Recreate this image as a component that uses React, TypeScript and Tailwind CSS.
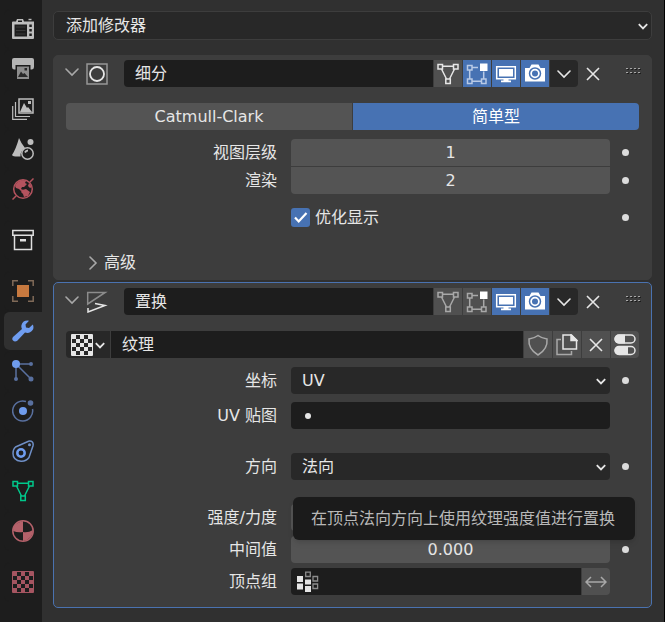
import { useState, type ReactNode } from "react";

function Icon({ children, className = "" }: { children: ReactNode; className?: string }) {
  return (
    <svg viewBox="0 0 22 22" className={`h-[22px] w-[22px] shrink-0 ${className}`} fill="none" stroke="currentColor" strokeWidth="1.5" aria-hidden="true">
      {children}
    </svg>
  );
}

function Chevron({ className = "" }: { className?: string }) {
  return (
    <svg viewBox="0 0 14 14" className={`h-[14px] w-[14px] shrink-0 ${className}`} fill="none" stroke="currentColor" strokeWidth="1.6" strokeLinecap="round" aria-hidden="true">
      <path d="M1 4l6 6 6-6" />
    </svg>
  );
}

function SmallChevron({ className = "" }: { className?: string }) {
  return (
    <svg viewBox="0 0 10 8" className={`h-2 w-[10px] shrink-0 ${className}`} fill="none" stroke="currentColor" strokeWidth="1.8" aria-hidden="true">
      <path d="M.8 2.200L5 6.500l4.200-4.300" />
    </svg>
  );
}

function Cross() {
  return (
    <svg viewBox="0 0 14 14" className="h-[14px] w-[14px]" fill="none" stroke="currentColor" strokeWidth="1.6" aria-hidden="true">
      <path d="M1 1l12 12M13 1L1 13" />
    </svg>
  );
}

function Grip() {
  return (
    <svg viewBox="0 0 16 8" className="h-2 w-4" aria-hidden="true">
      {[0, 4, 8, 12].map((x) => (
        <g key={x}>
          <path d={`M${x} 1h2v1h-2zM${x} 5h2v1h-2z`} fill="#a8a8a8" />
          <path d={`M${x + 1} 2h2v1h-2zM${x + 1} 6h2v1h-2z`} fill="#1c1c1c" />
        </g>
      ))}
    </svg>
  );
}

const MeshIcon = ({ className = "" }: { className?: string }) => (
  <Icon className={className}>
    <path d="M1 1.500h4.500V6H1zM16.500 1.500H21V6h-4.500zM8.800 16h4.500v4.500H8.800zM5.500 3.200h11M4.500 6l5 10M17.500 6l-5 10" />
  </Icon>
);

const EditIcon = ({ className = "" }: { className?: string }) => (
  <Icon className={className}>
    <path d="M1.500 2.500H6V7H1.500zM1.500 16H6v4.500H1.500zM15.500 16H20v4.500h-4.500zM3.700 7v9M6 18.300h9.500M17.700 8.500V16M6 4.500h6" />
    <path d="M14 .5h7.500V8H14z" fill="white" stroke="none" />
  </Icon>
);

const MonitorIcon = () => (
  <Icon>
    <path d="M1.700 3.700h18.600v12H1.700z" />
    <path d="M4 6h14v7.500H4zM8.500 15.500h5V18h-5zM6 17.500h10v1.700H6z" fill="currentColor" stroke="none" />
  </Icon>
);

const CameraIcon = () => (
  <Icon>
    <path d="M1 5h4.500l2-3.500h7l2 3.500H21v13.500H1z" fill="currentColor" stroke="none" />
    <circle cx="11" cy="10.500" r="5.500" stroke="#4772b3" />
    <circle cx="11" cy="10.500" r="3" fill="#4772b3" stroke="none" />
  </Icon>
);

const CheckerIcon = () => (
  <Icon>
    <path d="M.5 .5h21v21H.5z" strokeWidth="1" />
    {[0, 1, 2, 3, 4].map((row) =>
      [0, 1, 2, 3, 4]
        .filter((col) => (row + col) % 2 === 0)
        .map((col) => <rect key={`${row}${col}`} x={1 + col * 4} y={1 + row * 4} width="4" height="4" fill="currentColor" stroke="none" />),
    )}
  </Icon>
);

type Tab = { name: string; className: string; icon: ReactNode };

const tabGroups: Tab[][] = [
  [
    {
      name: "工具", className: "text-[#bdbdbd]",
      icon: (
        <Icon>
          <path d="M1 3.500h3L5 1h6l1 2.500h10V20q0 1-1 1H1q-1 0-1-1V4.500q0-1 1-1z" fill="currentColor" stroke="none" />
          <path d="M16.500 .8h3v1.400h-3z" fill="currentColor" stroke="none" />
          <path d="M6 2.500h4V4H6zM2.500 6.500h12.500v12H2.500zM17.300 6.500h2.500v2.500h-2.500zM17.300 11h2.500v2.500h-2.500zM17.300 15.500h2.500V18h-2.500z" fill="#1d1d1d" stroke="none" />
          <path d="M4 9h9.500M4 12.500h9.500M4 16h9.500" stroke="#3a3a3a" strokeWidth="1" />
        </Icon>
      ),
    },
    {
      name: "输出", className: "text-[#b5b5b5]",
      icon: (
        <Icon>
          <path d="M2 0h18q2 0 2 2v7q0 2-2 2.500h-1.500V7h-15v4.500H2Q0 11 0 9V2q0-2 2-2z" fill="currentColor" stroke="none" />
          <path d="M5 8.500h12V21H5z" fill="#8d8d8d" stroke="none" />
          <path d="M6 19l3-5.500 2 2.500 1.500-1L16 19zM12.500 10H15v2.500h-2.500z" fill="#292929" stroke="none" />
        </Icon>
      ),
    },
    {
      name: "视图层", className: "text-[#bdbdbd]",
      icon: (
        <Icon>
          <path d="M7 1h14v14H7z" />
          <path d="M8 14l4-9 3 5 1-1 4 5zM16 3h3v3h-3z" fill="currentColor" stroke="none" />
          <path d="M3.500 4v14.500H18M.7 8v13.300H15" strokeWidth="1.200" />
        </Icon>
      ),
    },
    {
      name: "场景", className: "text-[#bdbdbd]",
      icon: (
        <Icon>
          <path d="M7 0q2 5 6 10-5 3-4.500 8.500Q1 19 0 17 4 11 7 0z" fill="currentColor" stroke="none" />
          <circle cx="18.500" cy="4" r="3" fill="currentColor" stroke="none" />
          <circle cx="15.500" cy="15.500" r="5.700" fill="#1d1d1d" />
          <path d="M13 14.500q1-2 3-2" strokeWidth="2" />
        </Icon>
      ),
    },
    {
      name: "世界环境", className: "text-[#b4535e]",
      icon: (
        <Icon>
          <circle cx="11" cy="11" r="9.300" strokeWidth="1.500" />
          <path d="M.5 21.500L4 18M18 4L21.500 .5" />
          <path d="M3 8q2-5 8-6l3 1-1 2 2 1-3 3-2 0-1 2 2 1-2 1-2-2-3-1zM10 12l4-1 4 3-2 4-4 1-1-3-2-2zM17 5l3 4-2 1-2-2z" fill="currentColor" stroke="none" />
        </Icon>
      ),
    },
  ],
  [
    {
      name: "集合", className: "text-[#dfdfdf]",
      icon: <Icon><path d="M.8 1.500h20.400v4.700H.8zM2.500 6.500v14h17v-14" /><path d="M8 10h6v2.500H8z" fill="currentColor" stroke="none" /></Icon>,
    },
  ],
  [
    {
      name: "物体", className: "text-[#c7793f]",
      icon: <Icon><path d="M5 5h12v12H5z" fill="currentColor" stroke="none" /><path d="M.8 6V.8H6M16 .8h5.200V6M21.200 16v5.200H16M6 21.200H.8V16" stroke="#806a58" /></Icon>,
    },
    {
      name: "修改器", className: "text-[#6f9df0]",
      icon: <Icon><path d="M20.800 4.500L17 8l-3-.5L13.500 4.500 17 .7Q11 0 9.500 5q-.5 2.500.5 4L1 17q-1.500 2 0 3.500t4 .5l8-8.500q5 1.500 8-3 1-2.500-.2-5z" fill="currentColor" stroke="none" /></Icon>,
    },
    {
      name: "粒子", className: "text-[#59709f]",
      icon: (
        <Icon>
          <path d="M4 4h15M4 4l15 15M4 4v15" />
          <circle cx="4" cy="4" r="4" fill="#6f9ced" stroke="none" />
          <path d="M17 4a2 2 0 104 0 2 2 0 10-4 0M2 19a2 2 0 104 0 2 2 0 10-4 0M16.500 19a2.500 2.500 0 105 0 2.500 2.500 0 10-5 0" fill="currentColor" stroke="none" />
        </Icon>
      ),
    },
    {
      name: "物理", className: "text-[#59709f]",
      icon: <Icon><path d="M14 1.500A10 10 0 1 0 20.500 9" /><circle cx="11" cy="11" r="4" fill="#6f9ced" stroke="none" /><circle cx="18.500" cy="3" r="2.800" fill="currentColor" stroke="none" /></Icon>,
    },
    {
      name: "约束", className: "text-[#6f8fc6]",
      icon: <Icon><path d="M3.500 7L16.500 1.200q5.500-.7 4.500 4.500L17 17.500q-3 4-8 3.700-8-.7-8-7.700Q1 9 3.500 7z" /><circle cx="9" cy="13" r="3.700" strokeWidth="2.500" stroke="#6f9ced" /><circle cx="17.500" cy="4.700" r="1.500" fill="currentColor" stroke="none" /></Icon>,
    },
    { name: "数据", className: "text-[#00c88b]", icon: <MeshIcon /> },
    {
      name: "材质", className: "text-[#b4616a]",
      icon: <Icon><circle cx="11" cy="11" r="10.200" /><path d="M11 1v11Q6 13 1 11 1 3 11 1zM11 12q5 1 10-2 0 9-10 11z" fill="currentColor" stroke="none" /></Icon>,
    },
  ],
  [{ name: "纹理", className: "text-[#a65561]", icon: <CheckerIcon /> }],
];

function Sidebar() {
  const [active, setActive] = useState("修改器");
  return (
    <nav aria-label="属性" className="flex w-[42px] shrink-0 flex-col bg-[#1d1d1d] pt-[9px] pl-1">
      {tabGroups.map((group, i) => (
        <div key={i} className="mb-[11px] flex flex-col">
          {group.map((tab) => (
            <button
              key={tab.name}
              type="button"
              aria-label={tab.name}
              onClick={() => setActive(tab.name)}
              className={`flex h-10 items-center rounded-l-md border-y border-[#1d1d1d] pl-2 ${tab.className} ${tab.name === active ? "bg-[#303030]" : ""}`}
            >
              {tab.icon}
            </button>
          ))}
        </div>
      ))}
    </nav>
  );
}

function ToolButton({ label, active = false, children }: { label: string; active?: boolean; children: ReactNode }) {
  return (
    <button
      type="button"
      aria-label={label}
      className={`flex h-full w-7 shrink-0 items-center justify-center ${active ? "bg-[#4772b3] text-white" : "bg-[#505050] text-[#a8a8a8]"}`}
    >
      {children}
    </button>
  );
}

function ModifierHeader({ name, icon, editing = false }: { name: string; icon: ReactNode; editing?: boolean }) {
  return (
    <header className="flex h-[27px] items-center pr-[9px] pl-[11px]">
      <button type="button" aria-label={`折叠 ${name}`} className="mr-[7px] pb-1 text-[#a8a8a8]"><Chevron /></button>
      {icon}
      <div className="ml-4 flex h-full min-w-0 flex-1 gap-px">
        <input aria-label="名称" defaultValue={name} className="h-full min-w-0 flex-1 rounded-l bg-[#1d1d1d] px-[11px] pb-1" />
        <ToolButton label="在笼架上"><MeshIcon className={editing ? "text-[#e6e6e6]" : ""} /></ToolButton>
        <ToolButton label="编辑模式" active={editing}><EditIcon className={editing ? "text-[#b9cae6]" : ""} /></ToolButton>
        <ToolButton label="实时" active><MonitorIcon /></ToolButton>
        <ToolButton label="渲染" active><CameraIcon /></ToolButton>
        <button type="button" aria-label="更多" className="flex w-7 shrink-0 items-center justify-center rounded-r bg-[#282828]"><Chevron /></button>
      </div>
      <button type="button" aria-label="移除" className="flex h-full w-[30px] shrink-0 items-center justify-center"><Cross /></button>
      <button type="button" aria-label="移动" className="ml-[18px] flex h-full w-4 shrink-0 items-start pt-[7px]"><Grip /></button>
    </header>
  );
}

function Row({ label, htmlFor, dot = true, children }: { label?: string; htmlFor?: string; dot?: boolean; children: ReactNode }) {
  return (
    <div className="grid h-[27px] grid-cols-[minmax(0,225fr)_minmax(0,319fr)_29px] items-center px-3">
      {label ? <label htmlFor={htmlFor} className="pr-[14px] text-right">{label}</label> : <span />}
      <div className="relative flex h-full items-center">{children}</div>
      {dot && <button type="button" aria-label="动画属性" className="ml-3 h-[7px] w-[7px] rounded-full bg-[#dcdcdc]" />}
    </div>
  );
}

function Select({ id, value, options }: { id: string; value: string; options: string[] }) {
  return (
    <>
      <select id={id} defaultValue={value} className="h-full w-full appearance-none rounded bg-[#282828] px-[11px]">
        {options.map((o) => <option key={o}>{o}</option>)}
      </select>
      <SmallChevron className="pointer-events-none absolute right-1" />
    </>
  );
}

const numberBox = "h-full w-full bg-[#545454] text-center";

export default function App() {
  const [method, setMethod] = useState("简单型");
  return (
    <div className="flex min-h-screen bg-[#303030] font-['DejaVu_Sans','Noto_Sans_CJK_SC',sans-serif] text-base leading-6 text-[#e6e6e6]">
      <Sidebar />
      <main className="min-w-0 flex-1 border-r border-black pt-[11px] pr-3 pb-3 pl-[11px]">
        <div className="relative flex items-center">
          <select aria-label="添加修改器" className="h-[29px] w-full appearance-none rounded-[5px] border border-[#3d3d3d] bg-[#282828] px-3">
            <option>添加修改器</option>
            <option>细分</option>
            <option>置换</option>
          </select>
          <SmallChevron className="pointer-events-none absolute right-1" />
        </div>

        <section aria-label="细分" className="mt-[15px] rounded-[5px] border border-[#3d3d3d] bg-[#3d3d3d] pt-1 pb-[3px]">
          <ModifierHeader
            name="细分"
            editing
            icon={<Icon><path d="M1 1h20v20H1z" stroke="#969696" /><circle cx="11" cy="11" r="7" strokeWidth="1.800" /></Icon>}
          />
          <div className="mx-3 mt-4 flex h-[27px] gap-px overflow-hidden rounded">
            {["Catmull-Clark", "简单型"].map((m) => (
              <button key={m} type="button" aria-pressed={m === method} onClick={() => setMethod(m)} className={`flex-1 ${m === method ? "bg-[#4772b3] text-white" : "bg-[#545454]"}`}>
                {m}
              </button>
            ))}
          </div>
          <div className="mt-[9px] flex flex-col gap-px">
            <Row label="视图层级" htmlFor="levels"><input id="levels" defaultValue="1" className={`${numberBox} rounded-t`} /></Row>
            <Row label="渲染" htmlFor="render"><input id="render" defaultValue="2" className={`${numberBox} rounded-b`} /></Row>
          </div>
          <div className="mt-[10px]">
            <Row>
              <input id="optimal" type="checkbox" defaultChecked className="peer h-[19px] w-[19px] appearance-none rounded-[3px] bg-[#545454] checked:bg-[#4772b3]" />
              <svg viewBox="0 0 19 19" className="pointer-events-none absolute left-0 hidden h-[19px] w-[19px] peer-checked:block" fill="none" stroke="white" strokeWidth="2.200" aria-hidden="true">
                <path d="M4 9.500l3.700 4L15.500 5" />
              </svg>
              <label htmlFor="optimal" className="ml-[5px]">优化显示</label>
            </Row>
          </div>
          <button type="button" className="mt-[18px] ml-8 flex h-[27px] items-center gap-1">
            <Chevron className="-rotate-90 text-[#a8a8a8]" />
            高级
          </button>
        </section>

        <section aria-label="置换" className="mt-[2px] rounded-[5px] border border-[#4a72b0] bg-[#3d3d3d] pt-[5px] pb-3">
          <ModifierHeader
            name="置换"
            icon={<Icon><path d="M1.700 13V1.500h17.500z" stroke="#8c8c8c" /><path d="M9 12.500l10 2L2 21v-4" /></Icon>}
          />
          <div className="mx-3 mt-4 flex h-[27px] gap-px overflow-hidden rounded">
            <button type="button" aria-label="浏览纹理" className="flex w-11 shrink-0 items-center justify-center gap-[2px] bg-[#282828]">
              <CheckerIcon />
              <SmallChevron />
            </button>
            <input aria-label="纹理名称" defaultValue="纹理" className="h-full min-w-0 flex-1 bg-[#1d1d1d] px-[11px] pb-1" />
            <ToolButton label="伪用户"><Icon><path d="M11 1.500q4 3 9 3.500 1 10-9 16Q1 15 2 5q5-.5 9-3.500z" /></Icon></ToolButton>
            <ToolButton label="新建">
              <Icon className="text-[#e6e6e6]"><path d="M7 1h8.500l5 5v9H7z" /><path d="M15 1v5.500h6z" fill="currentColor" /><path d="M5 5.500H1V20.500h14.500V17" stroke="#a8a8a8" /></Icon>
            </ToolButton>
            <button type="button" aria-label="断开" className="flex w-7 shrink-0 items-center justify-center bg-[#505050]"><Cross /></button>
            <button type="button" aria-label="在纹理选项卡中显示" className="flex w-7 shrink-0 items-center justify-center bg-[#505050]">
              <Icon>
                <rect x="1" y="1" width="20" height="8" rx="4" /><path d="M5 .5h6v9H5a4.500 4.500 0 010-9z" fill="currentColor" stroke="none" />
                <rect x="1" y="12.500" width="20" height="8" rx="4" /><path d="M5 12h9v9H5a4.500 4.500 0 010-9z" fill="currentColor" stroke="none" />
              </Icon>
            </button>
          </div>
          <div className="mt-[9px] flex flex-col gap-2">
            <Row label="坐标" htmlFor="coords"><Select id="coords" value="UV" options={["UV", "局部", "全局"]} /></Row>
            <Row label="UV 贴图" htmlFor="uvmap" dot={false}>
              <input id="uvmap" className="h-full w-full rounded bg-[#1d1d1d] pl-8" />
              <span className="pointer-events-none absolute left-[14px] h-[6px] w-[6px] rounded-full bg-[#e6e6e6]" />
            </Row>
          </div>
          <div className="mt-6">
            <Row label="方向" htmlFor="direction"><Select id="direction" value="法向" options={["X", "Y", "Z", "法向"]} /></Row>
          </div>
          <div className="mt-6 flex flex-col gap-[5px]">
            <Row label="强度/力度" htmlFor="strength">
              <input id="strength" defaultValue="1.000" className={`${numberBox} rounded`} />
              <div role="tooltip" className="absolute -top-[7px] left-[2px] z-10 flex h-[43px] items-center rounded-md bg-[#1b1b1b] pr-5 pl-[18px] whitespace-nowrap text-[#b8b8b8] shadow-md">
                在顶点法向方向上使用纹理强度值进行置换
              </div>
            </Row>
            <Row label="中间值" htmlFor="mid"><input id="mid" defaultValue="0.000" className={`${numberBox} rounded`} /></Row>
            <Row label="顶点组" htmlFor="group" dot={false}>
              <input id="group" className="h-full min-w-0 flex-1 rounded-l bg-[#1d1d1d] pl-8" />
              <Icon className="pointer-events-none absolute left-[6px]">
                <path d="M0 5h6v6H0zM0 12.500h6v6H0zM8 8.500h6v5H8zM8 15h6v6H8z" fill="currentColor" stroke="none" />
                <path d="M8.700 1.200h4.600v4.300H8.700zM16 5.500h4.600v4.500H16zM16 13h4.600v4.500H16z" stroke="#8d8d8d" strokeWidth="1.300" />
              </Icon>
              <button type="button" aria-label="反转" className="ml-px flex h-full w-7 items-center justify-center rounded-r bg-[#505050] text-[#a8a8a8]">
                <Icon><path d="M1 11h20M6 6l-5 5 5 5M16 6l5 5-5 5" /></Icon>
              </button>
            </Row>
          </div>
        </section>
      </main>
    </div>
  );
}
